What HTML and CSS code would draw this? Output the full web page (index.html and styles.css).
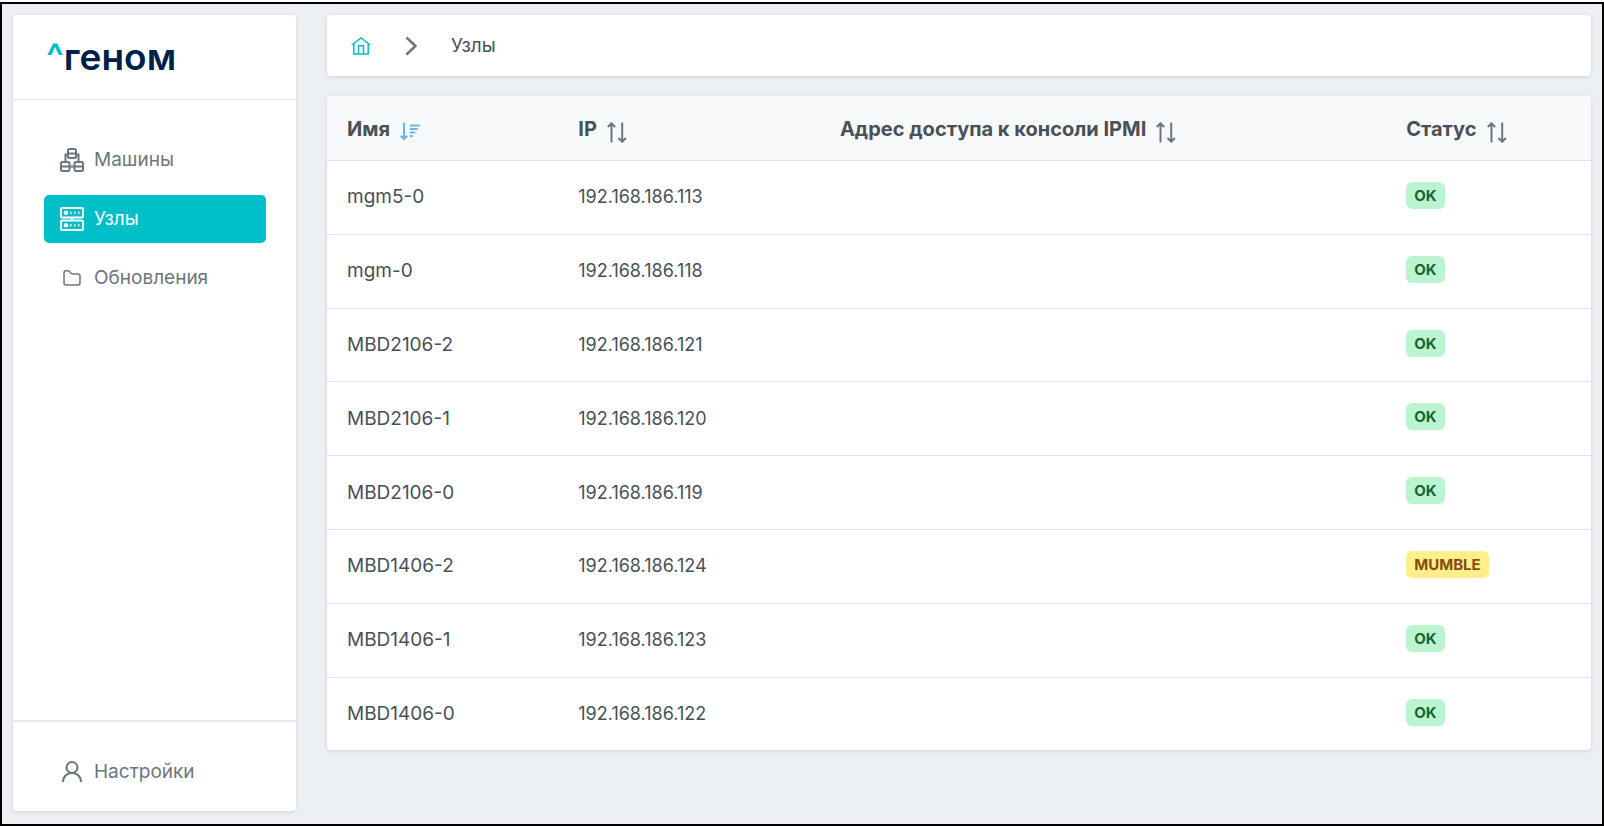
FILE: index.html
```
<!DOCTYPE html>
<html lang="ru">
<head>
    <meta charset="UTF-8">
    <meta name="viewport" content="width=device-width, initial-scale=1">
    <title>Узлы</title>

    <link rel="stylesheet" href="styles.css">
</head>
<body>
    <!-- shared icons -->
    <svg class="sprite" aria-hidden="true">
        <symbol id="sort" viewBox="0 0 20 21">
            <path d="M4.500 20.500V1.500M.8 5l3.700-3.700L8.200 5M15.200.5v19M11.500 16l3.700 3.700L18.900 16"/>
        </symbol>
        <symbol id="sort-down" viewBox="0 0 20 21">
            <path d="M4 1v16M.8 13.800L4 17l3.200-3.200M9.800 3.500h10M9.800 7h8M9.800 10.500h5.500M9.800 14h3"/>
        </symbol>
    </svg>

    <aside class="sidebar">
        <a href="#" class="logo"><span>^</span>геном</a>

        <nav class="menu">
            <a href="#machines">
                <svg width="24" height="24" viewBox="0 0 24 24">
                    <rect x="8" y="1" width="8" height="9" rx="1.500"/>
                    <rect x="1" y="14" width="8.500" height="9" rx="1.500"/>
                    <rect x="14.500" y="14" width="8.500" height="9" rx="1.500"/>
                    <path d="M8 5.500h8M1 18.500h22M8 6.500H5.500V14M16 6.500h2.500V14"/>
                </svg>
                Машины
            </a>
            <a href="#nodes" class="active">
                <svg width="24" height="24" viewBox="0 0 24 24">
                    <rect x="1" y="1" width="22" height="9.500" rx="1"/>
                    <rect x="1" y="13.500" width="22" height="9.500" rx="1"/>
                    <path d="M12 10.500v3"/>
                    <circle class="dot" cx="6" cy="5.700" r="2.200"/>
                    <circle class="dot" cx="6" cy="18.300" r="2.200"/>
                    <path d="M10 5.700h1.500M14 5.700h1.500M18 5.700h1.500M10 18.300h1.500M14 18.300h1.500M18 18.300h1.500"/>
                </svg>
                Узлы
            </a>
            <a href="#updates">
                <svg class="thin" width="24" height="24" viewBox="0 0 24 24">
                    <path d="M4 17V7q0-2.300 2-2.300h2q1 0 1.500.7l1.300 1.800q.5.800 1.400.800H18q2 0 2 2v7q0 2-2 2H6q-2 0-2-2z"/>
                </svg>
                Обновления
            </a>
        </nav>

        <div class="settings menu">
            <a href="#settings">
                <svg width="24" height="24" viewBox="0 0 24 24">
                    <circle cx="12" cy="7.500" r="5.500"/>
                    <path d="M3 22c0-5.500 4-9 9-9s9 3.500 9 9"/>
                </svg>
                Настройки
            </a>
        </div>
    </aside>

    <main>
        <nav class="breadcrumb">
            <a href="#" aria-label="Главная">
                <svg width="20" height="20" viewBox="0 0 20 20">
                    <path d="M.8 9L10 2l9.200 7M2.800 8v10h14.400V8M7.500 18V9.800h5V18"/>
                </svg>
            </a>
            <svg width="12" height="20" viewBox="0 0 12 20">
                <path d="M1.500 1.500L10.500 10l-9 8.500"/>
            </svg>
            <span>Узлы</span>
        </nav>

        <table class="nodes">
            <thead>
                <tr>
                    <th class="name" aria-sort="descending"><button>Имя <svg class="sorted"><use href="#sort-down"/></svg></button></th>
                    <th class="ip"><button>IP <svg><use href="#sort"/></svg></button></th>
                    <th class="ipmi"><button>Адрес доступа к консоли IPMI <svg><use href="#sort"/></svg></button></th>
                    <th><button>Статус <svg><use href="#sort"/></svg></button></th>
                </tr>
            </thead>
            <tbody>
                <tr>
                    <td>mgm5-0</td>
                    <td class="address">192.168.186.113</td>
                    <td></td>
                    <td class="status"><span class="badge ok">OK</span></td>
                </tr>
                <tr>
                    <td>mgm-0</td>
                    <td class="address">192.168.186.118</td>
                    <td></td>
                    <td class="status"><span class="badge ok">OK</span></td>
                </tr>
                <tr>
                    <td>MBD2106-2</td>
                    <td class="address">192.168.186.121</td>
                    <td></td>
                    <td class="status"><span class="badge ok">OK</span></td>
                </tr>
                <tr>
                    <td>MBD2106-1</td>
                    <td class="address">192.168.186.120</td>
                    <td></td>
                    <td class="status"><span class="badge ok">OK</span></td>
                </tr>
                <tr>
                    <td>MBD2106-0</td>
                    <td class="address">192.168.186.119</td>
                    <td></td>
                    <td class="status"><span class="badge ok">OK</span></td>
                </tr>
                <tr>
                    <td>MBD1406-2</td>
                    <td class="address">192.168.186.124</td>
                    <td></td>
                    <td class="status"><span class="badge mumble">MUMBLE</span></td>
                </tr>
                <tr>
                    <td>MBD1406-1</td>
                    <td class="address">192.168.186.123</td>
                    <td></td>
                    <td class="status"><span class="badge ok">OK</span></td>
                </tr>
                <tr>
                    <td>MBD1406-0</td>
                    <td class="address">192.168.186.122</td>
                    <td></td>
                    <td class="status"><span class="badge ok">OK</span></td>
                </tr>
            </tbody>
        </table>
    </main>
</body>
</html>
```
FILE: styles.css
```
* {
    box-sizing: border-box;
}

html {
    background: #fff;
}

body {
    margin: 2px 0 0;
    min-height: calc(100vh - 2px);
    padding: 11px 11px 13px;
    border: 2px solid #000;
    background: #eceff4;
    color: #495057;
    font-family: Inter, "Liberation Sans", sans-serif;
    font-size: 19px;
    line-height: 24px;

    display: flex;
    gap: 31px;
}

a {
    color: inherit;
    text-decoration: none;
}

svg {
    flex: none;
    fill: none;
    stroke: currentColor;
    stroke-width: 2;
}

.sprite {
    display: none;
}

.sidebar, .breadcrumb, .nodes {
    background: #fff;
    border-radius: 4px;
    box-shadow: 0 1px 4px rgba(0, 0, 0, .12);
}

/* sidebar */

.sidebar {
    flex: none;
    width: 283px;
    display: flex;
    flex-direction: column;
}

.logo {
    padding: 22px 33px;
    border-bottom: 1px solid #dee2e6;
    color: #00204a;
    font-size: 37px;
    font-weight: 600;
    line-height: 40px;
}

.logo span {
    color: #00bfc9;
}

.menu {
    padding: 36px 30px 36px 31px;
    display: flex;
    flex-direction: column;
    gap: 11px;
}

.menu a {
    height: 48px;
    padding: 0 16px;
    border-radius: 5px;
    color: #6c757d;
    display: flex;
    align-items: center;
    gap: 10px;
}

.menu a.active {
    background: #00bfc9;
    color: #fff;
}

.menu .dot {
    fill: currentColor;
    stroke: none;
}

.menu .thin {
    stroke-width: 1.500;
}

.settings {
    margin-top: auto;
    padding: 26px 30px 15px 31px;
    border-top: 2px solid #e5e8eb;
}

/* content */

main {
    flex: 1;
    display: flex;
    flex-direction: column;
    align-items: stretch;
    gap: 20px;
}

.breadcrumb {
    height: 61px;
    padding: 0 24px;
    display: flex;
    align-items: center;
    gap: 34px;
}

.breadcrumb a {
    height: 20px;
    color: #00bfc9;
}

.breadcrumb a svg {
    display: block;
    stroke-width: 1.500;
}

.breadcrumb > svg {
    color: #6c757d;
    stroke-width: 2.500;
}

.nodes {
    width: 100%;
    height: 654px;
    table-layout: fixed;
    border-spacing: 0;
    overflow: hidden;
}

th {
    height: 65px;
    padding: 3px 20px 0;
    background: #f8f9fb;
    border-bottom: 1px solid #dee2e6;
    text-align: left;
}

.name {
    width: 18.3%;
}

.ip {
    width: 20.7%;
}

.ipmi {
    width: 44.8%;
}

th button {
    padding: 0;
    border: none;
    background: none;
    color: inherit;
    font: inherit;
    font-size: 20px;
    font-weight: 700;
    display: flex;
    gap: 10px;
    cursor: pointer;
}

th svg {
    width: 20px;
    height: 21px;
    margin-top: 5px;
    color: #6c757d;
}

th svg.sorted {
    color: #64b5f6;
}

td {
    padding: 0 20px;
    border-bottom: 1px solid #dfe1e6;
}

tr:last-child td {
    border-bottom: none;
}

td.address {
    font-size: 18px;
}

td.status {
    padding-top: 21px;
    vertical-align: top;
}

.badge {
    display: block;
    width: fit-content;
    padding: 0 8px;
    border-radius: 6px;
    font-size: 15px;
    font-weight: 700;
    line-height: 27px;
}

.ok {
    background: #bbf5d0;
    color: #166534;
}

.mumble {
    background: #ffee8a;
    color: #854d0e;
}
```
